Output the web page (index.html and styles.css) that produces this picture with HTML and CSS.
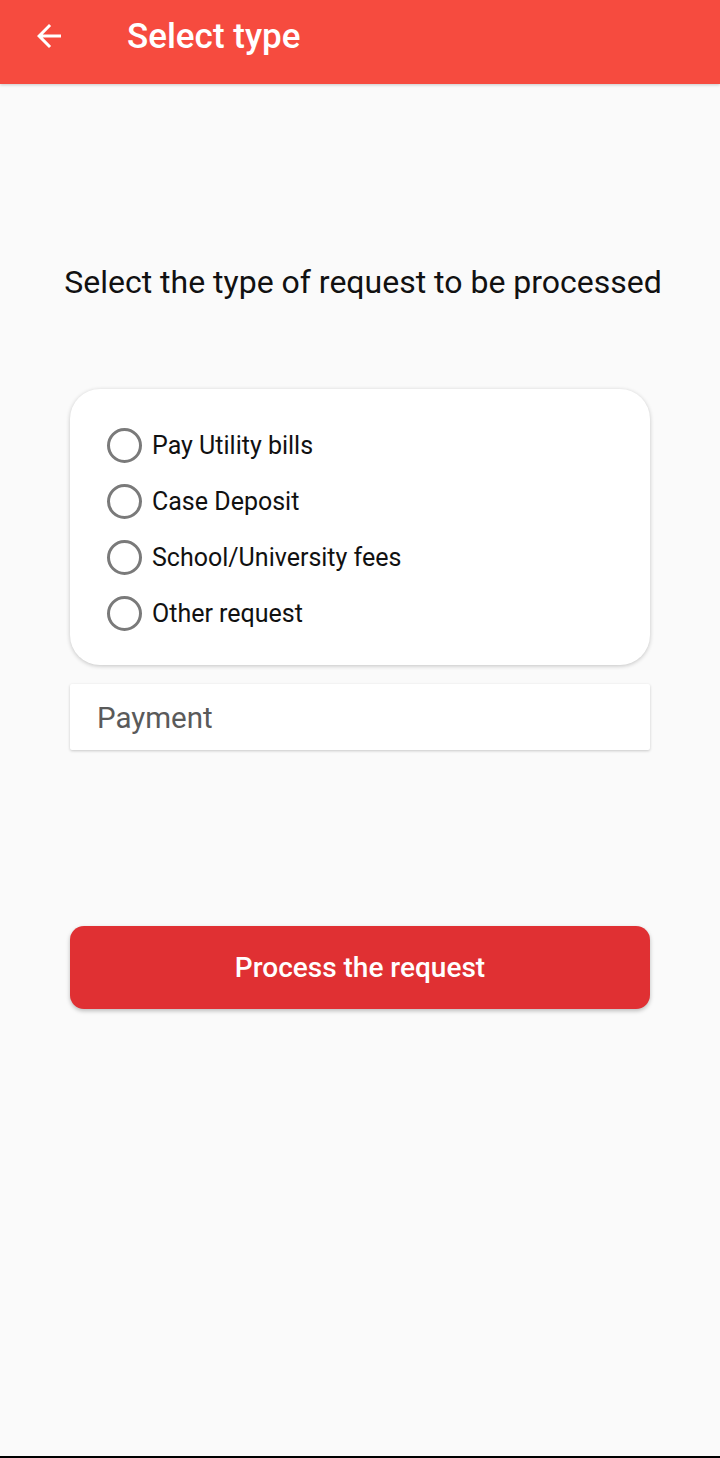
FILE: index.html
```html
<!DOCTYPE html>
<html>
<head>
<meta charset="utf-8">
<link rel="stylesheet" href="styles.css">
</head>
<body>
<div class="screen">
  <header class="appbar">
    <svg class="back" width="36" height="36" viewBox="0 0 24 24"><path d="M20 11H7.83l5.59-5.59L12 4l-8 8 8 8 1.41-1.41L7.83 13H20v-2z" fill="#fff"/></svg>
    <h1 class="title">Select type</h1>
  </header>
  <main class="content">
    <p class="prompt">Select the type of request to be processed</p>
    <div class="card">
      <label class="option"><span class="radio"></span><span class="label">Pay Utility bills</span></label>
      <label class="option"><span class="radio"></span><span class="label">Case Deposit</span></label>
      <label class="option"><span class="radio"></span><span class="label">School/University fees</span></label>
      <label class="option"><span class="radio"></span><span class="label">Other request</span></label>
    </div>
    <div class="field"><span class="placeholder">Payment</span></div>
    <button class="action">Process the request</button>
  </main>
  <div class="spacer"></div>
  <div class="bottom-line"></div>
</div>
</body>
</html>
```

FILE: styles.css
```css
* { box-sizing: border-box; }
html, body { margin: 0; padding: 0; }
body {
  background: #fafafa;
  font-family: Roboto, "Noto Sans", sans-serif;
  width: 720px;
  height: 1458px;
  overflow: hidden;
}
.screen {
  display: flex;
  flex-direction: column;
  height: 1458px;
}
.appbar {
  height: 84px;
  background: #f64b3f;
  display: flex;
  align-items: center;
  padding-left: 31px;
  box-shadow: 0 1px 3px rgba(0,0,0,0.2);
  flex-shrink: 0;
}
.back { display: block; margin-bottom: 12px; }
.title {
  margin: 0 0 12px 60px;
  color: #fff;
  font-size: 35px;
  font-weight: 500;
}
.content {
  display: flex;
  flex-direction: column;
  align-items: center;
}
.prompt {
  margin: 178px 0 0 6px;
  font-size: 32px;
  color: #111;
  line-height: 40px;
}
.card {
  margin-top: 87px;
  width: 580px;
  height: 276px;
  background: #fff;
  border-radius: 30px;
  box-shadow: 0 1px 4px rgba(0,0,0,0.22);
  padding: 28px 0 0 37px;
  display: flex;
  flex-direction: column;
}
.option {
  display: flex;
  align-items: center;
  height: 56px;
}
.radio {
  width: 35px;
  height: 35px;
  border: 3px solid #7a7a7a;
  border-radius: 50%;
  flex-shrink: 0;
}
.label {
  margin-left: 10px;
  font-size: 25px;
  color: #111;
}
.field {
  margin-top: 19px;
  width: 580px;
  height: 66px;
  background: #fff;
  border-radius: 2px;
  box-shadow: 0 1px 3px rgba(0,0,0,0.2);
  display: flex;
  align-items: center;
  padding-left: 27px;
}
.placeholder {
  font-size: 29.5px;
  color: #5a5a5a;
  margin-top: 2px;
}
.action {
  margin-top: 176px;
  width: 580px;
  height: 83px;
  border: none;
  border-radius: 14px;
  background: #e03033;
  color: #fff;
  font-family: Roboto, "Noto Sans", sans-serif;
  font-size: 28px;
  font-weight: 500;
  box-shadow: 0 2px 4px rgba(0,0,0,0.25);
}
.spacer { flex: 1; }
.bottom-line { height: 2px; background: #000; flex-shrink: 0; }
```
